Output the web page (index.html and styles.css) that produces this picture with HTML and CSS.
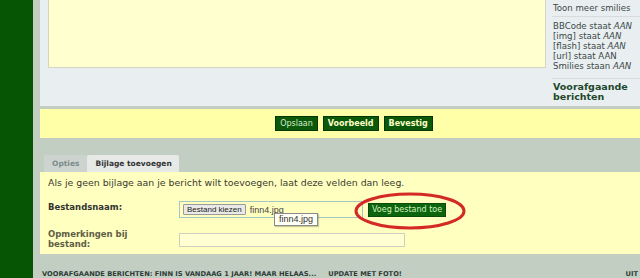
FILE: index.html
```html
<!DOCTYPE html>
<html lang="nl">
<head>
  <meta charset="UTF-8">
  <link rel="stylesheet" href="styles.css">
  <title>Bericht plaatsen</title>
</head>
<body>
<div class="page">
  <div class="rail"></div>

  <div class="main">
    <!-- bericht schrijven -->
    <div class="compose">
      <div class="editor"></div>
      <div class="sidebar">
        <div class="cell">Toon meer smilies</div>
        <div class="cell status">
          BBCode staat <i>AAN</i><br>
          [img] staat <i>AAN</i><br>
          [flash] staat <i>AAN</i><br>
          [url] staat AAN<br>
          Smilies staan <i>AAN</i>
        </div>
        <div class="prev">Voorafgaande berichten</div>
      </div>
    </div>

    <!-- knoppen -->
    <div class="actions">
      <button class="btn btn-save">Opslaan</button>
      <button class="btn btn-bold">Voorbeeld</button>
      <button class="btn btn-bold">Bevestig</button>
    </div>

    <!-- tabbladen -->
    <div class="tabs">
      <div class="tab">Opties</div>
      <div class="tab active">Bijlage toevoegen</div>
    </div>

    <div class="panel">
      <p class="hint">Als je geen bijlage aan je bericht wilt toevoegen, laat deze velden dan leeg.</p>
      <div class="form">
        <div class="label">Bestandsnaam:</div>
        <div class="field">
          <div class="filebox">
            <span class="choose">Bestand kiezen</span>
            <span class="filename">finn4.jpg</span>
            <span class="tooltip">finn4.jpg</span>
          </div>
          <div class="add-wrap">
            <button class="btn-add">Voeg bestand toe</button>
            <svg class="ring" width="112" height="38" viewBox="0 0 112 38">
              <ellipse cx="56" cy="19" rx="54" ry="17" fill="none" stroke="#d42a26" stroke-width="3"/>
            </svg>
          </div>
        </div>

        <div class="label label-light">Opmerkingen bij<br>bestand:</div>
        <div class="field">
          <div class="comment"></div>
        </div>
      </div>
    </div>

    <div class="topic">
      <span>VOORAFGAANDE BERICHTEN: FINN IS VANDAAG 1 JAAR! MAAR HELAAS...</span>
      <span class="topic-title">UPDATE MET FOTO!</span>
      <span class="topic-right">UIT</span>
    </div>
  </div>
</div>
</body>
</html>
```

FILE: styles.css
```css
body {
  margin: 0;
  font-family: "DejaVu Sans", Verdana, sans-serif;
  font-size: 8px;
  color: #333;
  background-color: #c3cec3;
  overflow: hidden;
}

.page {
  display: flex;
  height: 278px;
}

.rail {
  width: 33px;
  background-color: #055505; /* balk links */
}

.main {
  flex: 1;
  margin-left: 7px;
  display: flex;
  flex-direction: column;
}

/* bovenste deel */
.compose {
  display: flex;
  height: 107px;
  padding-left: 8px;
  background-color: #e9eff0;
}

.editor {
  width: 496px;
  height: 67px;
  background-color: #ffffd0;
  border: 1px solid #d6d6c0;
  border-top: none;
}

.sidebar {
  flex: 1;
  margin-left: 6px;
  font-size: 8.6px;
  color: #3c4848;
  line-height: 10px;
}

.cell {
  padding: 3px 0 3px 1px;
  border-bottom: 1px solid #d6dcdc;
}

.status {
  padding-top: 4px;
  padding-bottom: 7px;
  line-height: 10px;
}

.prev {
  padding: 3px 0 0 1px;
  font-weight: bold;
  font-size: 9.5px;
  color: #1e472c;
  line-height: 9.5px;
}

/* knoppenbalk */
.actions {
  display: flex;
  justify-content: center;
  align-items: center;
  gap: 5px;
  height: 30px;
  margin-top: 3px;
  padding-left: 28px;
  background-color: #ffffa8;
}

.btn {
  height: 15px;
  padding: 0 4px;
  font-family: inherit;
  font-size: 8px;
  background-color: #0b580b;
  border: 1px solid #023802;
  cursor: pointer;
}

.btn-save {
  color: #d6eccb;
}

.btn-bold {
  padding: 0 4px;
  font-weight: bold;
  color: #ffffc8;
}

/* tabbladen */
.tabs {
  display: flex;
  margin-top: 17px;
  padding-left: 4px;
}

.tab {
  height: 17px;
  line-height: 17px;
  padding: 0 8px;
  font-size: 7.5px;
  font-weight: bold;
  color: #7c8c8c;
  background-color: #cdd3ce;
  border-radius: 2px 2px 0 0;
}

.tab.active {
  padding: 0 7px 0 8px;
  color: #333;
  background-color: #e6e9e6;
}

.panel {
  height: 83px;
  padding: 5px 8px 0;
  box-sizing: border-box;
  background-color: #ffffc0;
}

.hint {
  margin: 0;
  font-size: 9.4px;
  line-height: 11px;
  color: #3a3a30;
}

.form {
  display: grid;
  grid-template-columns: 131px 1fr;
  row-gap: 10px;
  margin-top: 13px;
}

.label {
  padding-top: 1px;
  font-size: 8.5px;
  font-weight: bold;
  line-height: 10px;
  color: #333;
}

.label-light {
  color: #5e5e46;
}

.field {
  display: flex;
  align-items: center;
}

.filebox {
  position: relative;
  display: flex;
  align-items: center;
  width: 179px;
  height: 15px;
  padding-left: 3px;
  border: 1px solid #a6c6c2;
  font-family: "Liberation Sans", Arial, sans-serif;
}

.choose {
  height: 9px;
  padding: 0 3px;
  line-height: 9px;
  font-size: 8px;
  color: #222;
  background-color: #e9e9e6;
  border: 1px solid #9a9a9a;
  border-radius: 1px;
}

.filename {
  margin-left: 4px;
  font-size: 9px;
  color: #444;
}

.tooltip {
  position: absolute;
  left: 94px;
  top: 11px;
  width: 42px;
  height: 11px;
  line-height: 11px;
  text-align: center;
  font-size: 9px;
  color: #333;
  background-color: #fffff4;
  border: 1px solid #8a8a8a;
  box-shadow: 1px 1px 1px rgba(0, 0, 0, 0.2);
}

.add-wrap {
  position: relative;
  margin-left: 5px;
}

.btn-add {
  display: block;
  height: 14px;
  padding: 0 3px;
  font-family: inherit;
  font-size: 8px;
  color: #d2f2c0;
  background-color: #0c650c;
  border: 1px solid #0a4a0a;
}

.ring {
  position: absolute;
  left: -14px;
  top: -11px;
}

.comment {
  width: 224px;
  height: 12px;
  margin-top: 2px;
  background-color: #ffffd2;
  border: 1px solid #cfcfbf;
}

/* onderbalk */
.topic {
  display: flex;
  margin-top: 16px;
  padding-left: 2px;
  font-size: 6.7px;
  font-weight: bold;
  color: #2c3c38;
}

.topic-title {
  margin-left: 12px;
}

.topic-right {
  margin-left: auto;
  margin-right: 2px;
}
```
